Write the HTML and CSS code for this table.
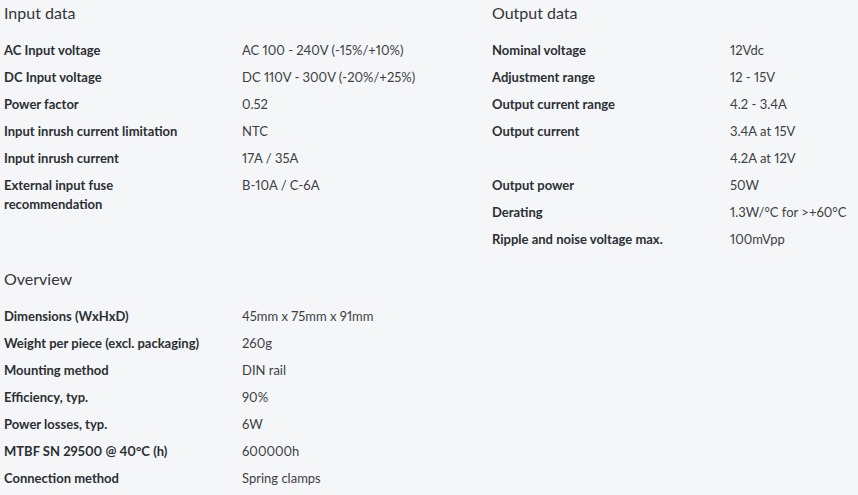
FILE: index.html
```html
<!DOCTYPE html>
<html lang="en">
<head>
<meta charset="utf-8">
<title>Specifications</title>
<link rel="stylesheet" href="styles.css">
</head>
<body>
<div class="page">
  <div class="top">
    <section class="spec">
      <h2 class="spec-title">Input data</h2>
      <dl class="spec-list">
        <dt>AC Input voltage</dt><dd>AC 100 - 240V (-15%/+10%)</dd>
        <dt>DC Input voltage</dt><dd>DC 110V - 300V (-20%/+25%)</dd>
        <dt>Power factor</dt><dd>0.52</dd>
        <dt>Input inrush current limitation</dt><dd>NTC</dd>
        <dt>Input inrush current</dt><dd>17A / 35A</dd>
        <dt>External input fuse recommendation</dt><dd>B-10A / C-6A</dd>
      </dl>
    </section>
    <section class="spec">
      <h2 class="spec-title">Output data</h2>
      <dl class="spec-list">
        <dt>Nominal voltage</dt><dd>12Vdc</dd>
        <dt>Adjustment range</dt><dd>12 - 15V</dd>
        <dt>Output current range</dt><dd>4.2 - 3.4A</dd>
        <dt>Output current</dt><dd>3.4A at 15V</dd>
        <dt></dt><dd>4.2A at 12V</dd>
        <dt>Output power</dt><dd>50W</dd>
        <dt>Derating</dt><dd>1.3W/°C for &gt;+60°C</dd>
        <dt>Ripple and noise voltage max.</dt><dd>100mVpp</dd>
      </dl>
    </section>
  </div>
  <section class="spec spec-overview">
    <h2 class="spec-title">Overview</h2>
    <dl class="spec-list">
      <dt>Dimensions (WxHxD)</dt><dd>45mm x 75mm x 91mm</dd>
      <dt>Weight per piece (excl. packaging)</dt><dd>260g</dd>
      <dt>Mounting method</dt><dd>DIN rail</dd>
      <dt>Efficiency, typ.</dt><dd>90%</dd>
      <dt>Power losses, typ.</dt><dd>6W</dd>
      <dt>MTBF SN 29500 @ 40°C (h)</dt><dd>600000h</dd>
      <dt>Connection method</dt><dd>Spring clamps</dd>
    </dl>
  </section>
</div>
</body>
</html>
```

FILE: styles.css
```css
html, body {
  margin: 0;
  padding: 0;
  background: #f5f6f8;
}
body {
  font-family: Lato, "Liberation Sans", sans-serif;
  color: #2d3033;
  font-variant-numeric: proportional-nums;
}
.page {
  padding: 2px 4px 0 4px;
  width: 850px;
}
.top {
  display: grid;
  grid-template-columns: 484px 1fr;
  column-gap: 4px;
}
.spec-title {
  margin: 0 0 13px 0;
  font-size: 16px;
  font-weight: 400;
  line-height: 22px;
  color: #333538;
}
.spec-list {
  margin: 0;
  display: grid;
  grid-template-columns: 238px 1fr;
}
.spec-list dt,
.spec-list dd {
  margin: 0;
  padding: 4px 0;
  font-size: 13px;
  line-height: 19px;
}
.spec-list dt {
  font-weight: 700;
  color: #2b2f33;
  padding-right: 30px;
}
.spec-list dd {
  color: #3c3f43;
}
.spec-overview {
  margin-top: 15px;
}
```
